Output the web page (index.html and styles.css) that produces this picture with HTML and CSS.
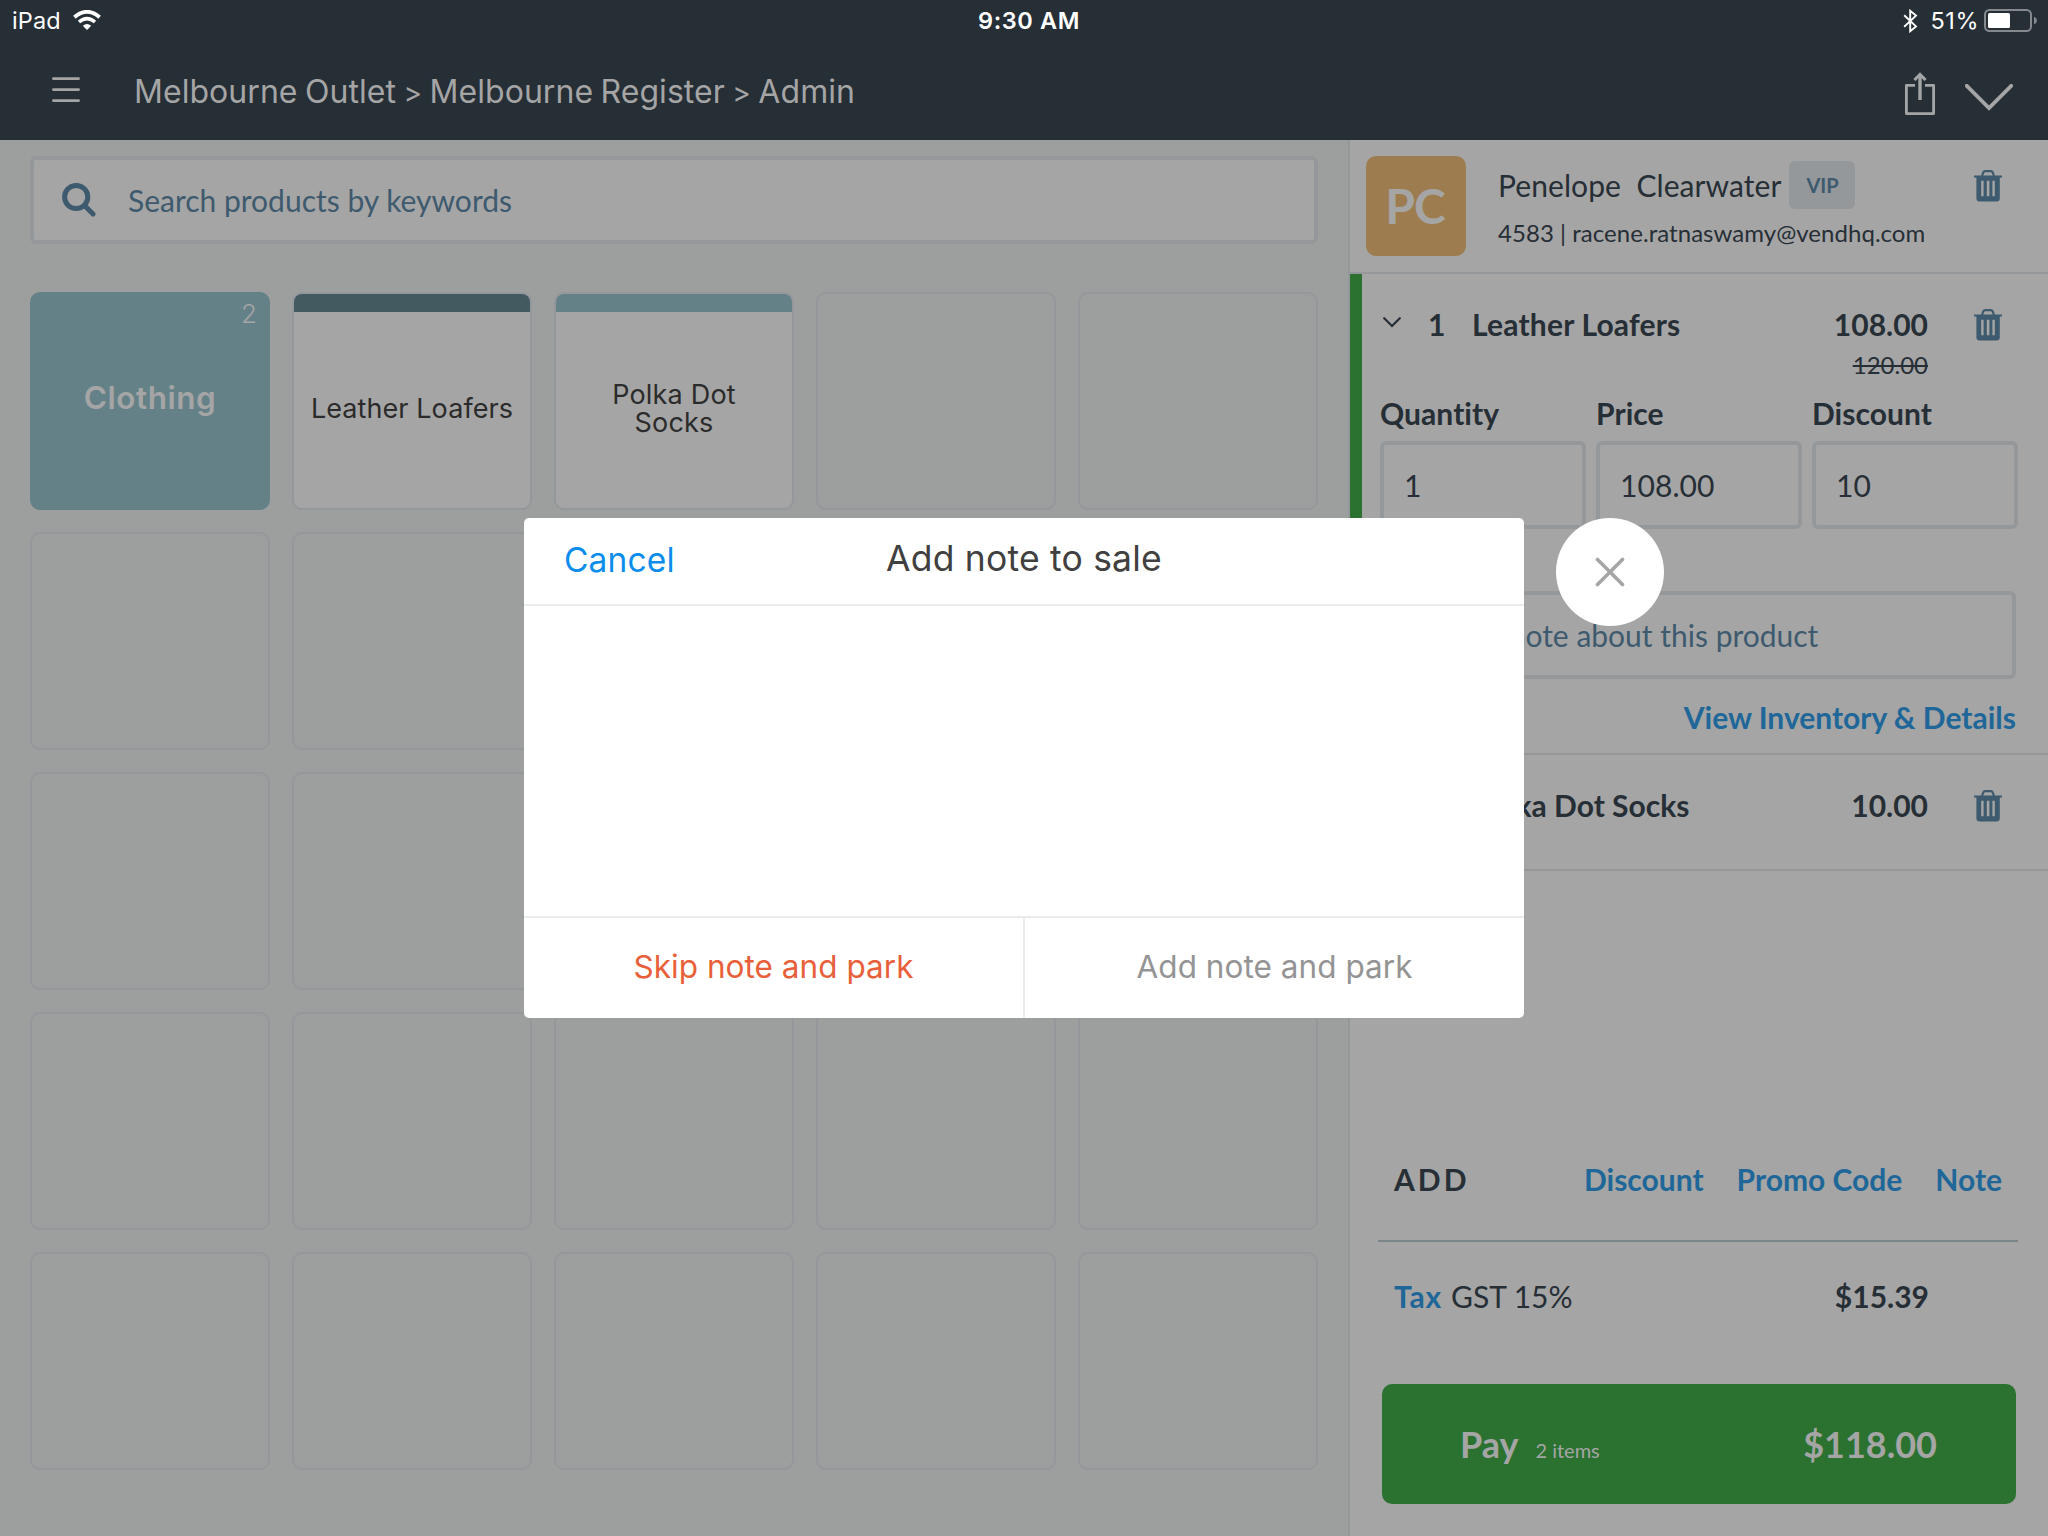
FILE: index.html
```html
<!DOCTYPE html>
<html lang="en">
<head>
<meta charset="utf-8">
<title>Add note to sale</title>
<link rel="stylesheet" href="styles.css">
</head>
<body>
<svg class="defs" width="0" height="0">
  <symbol id="trash" viewBox="0 0 28 32">
    <path d="M8 6 L9.2 2.6 Q9.7 1.2 11.2 1.2 H16.8 Q18.3 1.2 18.8 2.6 L20 6" fill="none" stroke="currentColor" stroke-width="2.2"/>
    <path fill="currentColor" fill-rule="evenodd" d="M0 5.5 H28 V7.6 H25.8 V28.2 Q25.8 31.5 22.5 31.5 H5.7 Q2.4 31.5 2.4 28.2 V7.6 H0 Z M7.2 10.8 V26.2 H9.6 V10.8 Z M12.8 10.8 V26.2 H15.4 V10.8 Z M18.4 10.8 V26.2 H20.8 V10.8 Z"/>
  </symbol>
</svg>
<div class="app">
  <header class="top">
    <div class="status">
      <div class="status-left"><span class="t-ipad">iPad</span>
        <svg width="28" height="20" viewBox="0 0 28 20"><path d="M1.4 7.2 Q14 -3.6 26.6 7.2" fill="none" stroke="#fff" stroke-width="3.8"/><path d="M6 12 Q14 5.2 22 12" fill="none" stroke="#fff" stroke-width="3.6"/><path d="M14 20 L9.8 15.8 Q14 12.4 18.2 15.8 Z" fill="#fff"/></svg>
      </div>
      <div class="t-time">9:30 AM</div>
      <div class="status-right">
        <svg width="15" height="24" viewBox="0 0 15 24"><path d="M1.2 6.2 L13 17.4 L7.2 22.2 V1.8 L13 6.6 L1.2 17.8" fill="none" stroke="#fff" stroke-width="1.9"/></svg>
        <span class="t-batt">51%</span>
        <svg width="54" height="23" viewBox="0 0 54 23"><rect x="1" y="1" width="46" height="21" rx="4.5" fill="none" stroke="#85898d" stroke-width="2"/><rect x="4" y="4" width="22" height="15" rx="1.5" fill="#fff"/><path d="M50 7.5 Q53 9 53 11.5 Q53 14 50 15.5 Z" fill="#85898d"/></svg>
      </div>
    </div>
    <div class="nav">
      <svg class="burger" width="28" height="26" viewBox="0 0 28 26"><path d="M1.4 1.6H26.6M1.4 12.6H26.6M1.4 23.6H26.6" stroke="#a5a5a5" stroke-width="2.8" stroke-linecap="round"/></svg>
      <div class="t-nav">Melbourne Outlet <span class="sep">&gt;</span> Melbourne Register <span class="sep">&gt;</span> Admin</div>
      <svg class="share" width="30" height="43" viewBox="0 0 30 43"><path d="M10 13.4H1.4V41.6H28.6V13.4H20" fill="none" stroke="#a5a5a5" stroke-width="2.8" stroke-linejoin="round"/><path d="M15 28V3" stroke="#a5a5a5" stroke-width="3.4"/><path d="M9.4 8L15 2.4L20.6 8" fill="none" stroke="#a5a5a5" stroke-width="3"/></svg>
      <svg class="down" width="48" height="27" viewBox="0 0 48 27"><path d="M1.8 1.8L24 24L46.2 1.8" fill="none" stroke="#a5a5a5" stroke-width="3.8" stroke-linecap="round"/></svg>
    </div>
  </header>
  <main class="main">
    <section class="catalog">
      <div class="search">
        <svg width="35" height="34" viewBox="0 0 35 34"><circle cx="14.2" cy="14" r="11.6" fill="none" stroke="#3e5a6e" stroke-width="5"/><path d="M22.5 22.5L31 31" stroke="#3e5a6e" stroke-width="5" stroke-linecap="round"/></svg>
        <span class="t-search">Search products by keywords</span>
      </div>
      <div class="tiles">
        <div class="tile folder"><span class="count">2</span><span class="folder-name">Clothing</span></div>
        <div class="tile product dark"><span>Leather Loafers</span></div>
        <div class="tile product light"><span class="wide">Polka Dot<br>Socks</span></div>
        <div class="tile"></div><div class="tile"></div>
        <div class="tile"></div><div class="tile"></div><div class="tile"></div><div class="tile"></div><div class="tile"></div>
        <div class="tile"></div><div class="tile"></div><div class="tile"></div><div class="tile"></div><div class="tile"></div>
        <div class="tile"></div><div class="tile"></div><div class="tile"></div><div class="tile"></div><div class="tile"></div>
        <div class="tile"></div><div class="tile"></div><div class="tile"></div><div class="tile"></div><div class="tile"></div>
      </div>
    </section>
    <aside class="cart">
      <div class="customer">
        <div class="avatar">PC</div>
        <div class="who">
          <div class="name"><span class="full-name">Penelope&nbsp; Clearwater</span><span class="vip">VIP</span></div>
          <div class="mail">4583 | racene.ratnaswamy@vendhq.com</div>
        </div>
        <svg class="bin"><use href="#trash"/></svg>
      </div>
      <div class="item open">
        <div class="line">
          <svg class="caret" width="18" height="11" viewBox="0 0 18 11"><path d="M1.2 1.2L9 9L16.8 1.2" fill="none" stroke="#262e36" stroke-width="2.2" stroke-linecap="round"/></svg>
          <span class="qty">1</span><span class="title">Leather Loafers</span><span class="price">108.00</span>
          <svg class="bin"><use href="#trash"/></svg>
        </div>
        <div class="was"><s>120.00</s></div>
        <div class="fields">
          <label>Quantity<span class="box">1</span></label>
          <label>Price<span class="box">108.00</span></label>
          <label>Discount<span class="box">10</span></label>
        </div>
        <div class="note box">Write a note about this product</div>
        <div class="details">View Inventory &amp; Details</div>
      </div>
      <div class="item closed">
        <div class="line">
          <svg class="caret" width="18" height="18" viewBox="0 0 18 18"><path d="M5 1.2L12.8 9L5 16.8" fill="none" stroke="#262e36" stroke-width="2.2" stroke-linecap="round"/></svg>
          <span class="qty">1</span><span class="title plain">Polka Dot Socks</span><span class="price">10.00</span>
          <svg class="bin"><use href="#trash"/></svg>
        </div>
      </div>
      <div class="totals">
        <div class="add"><span class="add-label">ADD</span><a>Discount</a><a>Promo Code</a><a>Note</a></div>
        <div class="tax"><b>Tax</b><span>GST 15%</span><strong>$15.39</strong></div>
        <div class="pay"><span class="pay-label">Pay</span><span class="pay-items">2 items</span><span class="pay-sum">$118.00</span></div>
      </div>
    </aside>
  </main>
  <div class="modal">
    <div class="modal-head"><span class="cancel">Cancel</span><span class="modal-title">Add note to sale</span></div>
    <div class="modal-body"></div>
    <div class="modal-foot"><span class="skip">Skip note and park</span><span class="park">Add note and park</span></div>
  </div>
  <div class="close"><svg width="30" height="30" viewBox="0 0 30 30"><path d="M2.5 2.5L27.5 27.5M27.5 2.5L2.5 27.5" stroke="#a5a5a5" stroke-width="3.6" stroke-linecap="round"/></svg></div>
</div>
</body>
</html>
```
FILE: styles.css
```css
* { box-sizing: border-box; }
body { margin: 0; font-family: Lato, sans-serif; font-size: 30px; line-height: 36px; color: #262e36; }
svg { display: block; flex: none; }
.defs { position: absolute; }
.app { width: 2048px; height: 1536px; overflow: hidden; position: relative; display: flex; flex-direction: column; background: #9c9f9d; }

.top { height: 140px; background: #262e36; color: #a5a5a5; font-family: Inter, sans-serif; }
.status { height: 40px; display: grid; grid-template-columns: 1fr auto 1fr; align-items: center; padding: 1px 11px 0 12px; color: #fff; font-size: 23.5px; }
.status-left, .status-right { display: flex; align-items: center; }
.status-left { gap: 12px; }
.status-left svg { margin-top: -1px; }
.status-right { justify-content: flex-end; margin-right: -1px; }
.t-ipad { letter-spacing: 0.1px; }
.t-time { font-weight: 600; letter-spacing: 0.6px; margin-left: 9px; }
.t-batt { margin: 0 5px 0 13px; letter-spacing: 0.5px; }
.nav { height: 100px; display: flex; align-items: center; padding: 0 35px 0 52px; font-size: 32px; }
.t-nav { margin: 4px auto 0 54px; word-spacing: -1.6px; letter-spacing: 0.05px; }
.sep { font-size: 28px; }
.share { margin: 6px 30px 0 0; }
.down { margin-top: 14px; }

.main { flex: 1; display: flex; }
.catalog { width: 1348px; padding: 16px 30px 0; }
.search { width: 1288px; height: 88px; border: 4px solid #94989b; border-radius: 6px; background: #a5a5a5; display: flex; align-items: center; gap: 31px; padding-left: 28px; color: #3e5a6e; }
.tiles { margin-top: 48px; display: grid; grid-template-columns: repeat(5, 240px); grid-auto-rows: 218px; gap: 22px; font-family: Inter, sans-serif; }
.tile { border: 2px solid #94979b; border-radius: 10px; position: relative; display: flex; align-items: center; justify-content: center; text-align: center; }
.folder { background: #648188; border-color: #648188; color: #a5a5a5; font-weight: 600; font-size: 31.5px; padding-bottom: 6px; }
.folder-name { letter-spacing: 0.5px; }
.count { position: absolute; top: 2px; right: 11px; font-weight: 300; font-size: 26px; }
.product { background: #a5a5a5; color: #2b2b2b; font-size: 27px; line-height: 28px; letter-spacing: 0.08px; overflow: hidden; padding-bottom: 2px; }
.product::before { content: ""; position: absolute; inset: 0 0 auto; height: 18px; background: #435a61; }
.product span { padding-top: 18px; }
.product .wide { letter-spacing: 0.2px; }
.light::before { background: #648188; }

.cart { flex: 1; border-left: 2px solid #94989b; background: #a5a5a5; display: flex; flex-direction: column; }
.bin { width: 28px; height: 32px; color: #3e5a6e; }
.customer { height: 134px; border-bottom: 2px solid #94989b; padding: 16px 46px 0 16px; display: flex; align-items: flex-start; }
.avatar { width: 100px; height: 100px; border-radius: 10px; background: #9d7d50; color: #a5a5a5; font-weight: 700; font-size: 48px; line-height: 100px; letter-spacing: -1px; text-align: center; padding-right: 2px; }
.who { flex: 1; padding: 5px 0 0 32px; }
.name { display: flex; align-items: center; height: 48px; }
.full-name { letter-spacing: 0.07px; }
.vip { margin-left: 8px; width: 66px; height: 48px; border-radius: 6px; background: #94989b; color: #3e5a6e; font-weight: 700; font-size: 20px; line-height: 48px; text-align: center; }
.mail { font-size: 24px; margin-top: 6px; letter-spacing: 0.04px; }
.customer .bin { margin-top: 14px; }

.item { border-bottom: 2px solid #94989b; }
.open { height: 481px; border-left: 12px solid #2b7231; padding: 32px 30px 0 18px; }
.closed { height: 116px; padding: 32px 30px 0; }
.line { display: flex; align-items: center; height: 38px; font-weight: 700; margin-right: 16px; }
.line span { margin-top: -2px; }
.caret { margin: 0 0 6px 3px; }
.qty { width: 44px; margin-left: 27px; }
.title { letter-spacing: 0.2px; }
.plain { letter-spacing: 0; padding-left: 1px; }
.line .price { margin-left: auto; margin-right: 46px; }
.was { text-align: right; font-size: 24px; margin: 3px 90px 0 0; }
.fields { display: flex; gap: 10px; margin-top: 12px; font-weight: 700; }
.fields label { width: 206px; letter-spacing: 0.06px; }
.box { display: flex; align-items: center; height: 88px; border: 4px solid #94989b; border-radius: 6px; padding-left: 20px; font-weight: 400; }
.fields .box { margin-top: 10px; }
.note { margin: 62px 2px 0; padding-left: 18px; color: #3e5a6e; }
.details { color: #1f6798; font-weight: 700; text-align: right; margin: 20px 2px 0; }

.totals { margin-top: auto; padding: 0 30px 32px 28px; }
.add { height: 81px; border-bottom: 2px solid #7a868a; padding: 0 16px; display: flex; gap: 33px; font-weight: 700; color: #1f6798; }
.add-label { color: #262e36; letter-spacing: 3px; margin-right: auto; }
.tax { display: flex; gap: 9px; padding: 36px 89px 0 16px; }
.tax b { color: #1f6798; letter-spacing: 0.8px; }
.tax strong { margin-left: auto; }
.pay { margin: 70px 2px 0 4px; height: 120px; border-radius: 10px; background: #2b7231; color: #a5a5a5; display: flex; align-items: baseline; padding: 0 79px 0 78px; line-height: 120px; font-size: 36px; font-weight: 700; }
.pay-items { font-size: 20px; font-weight: 400; margin-left: 17px; }
.pay-sum { margin-left: auto; }

.modal { position: absolute; left: 524px; top: 518px; width: 1000px; height: 500px; border-radius: 5px; background: #fff; overflow: hidden; display: flex; flex-direction: column; font-family: Inter, sans-serif; }
.modal-head { height: 88px; border-bottom: 2px solid #eaebeb; display: grid; grid-template-columns: 1fr auto 1fr; align-items: center; padding: 0 40px; color: #404040; }
.cancel { font-size: 33.5px; letter-spacing: 0.15px; color: #0a8deb; margin-top: -2px; }
.modal-title { font-size: 35.5px; letter-spacing: 0.2px; margin-top: -4px; }
.modal-body { flex: 1; }
.modal-foot { height: 102px; border-top: 2px solid #eaebeb; display: flex; font-size: 31.5px; letter-spacing: 0.04px; line-height: 98px; text-align: center; }
.modal-foot span { flex: 1; }
.skip { color: #e8603a; border-right: 2px solid #eaebeb; }
.park { color: #949494; }
.close { position: absolute; left: 1556px; top: 518px; width: 108px; height: 108px; border-radius: 50%; background: #fff; display: flex; align-items: center; justify-content: center; }
```
